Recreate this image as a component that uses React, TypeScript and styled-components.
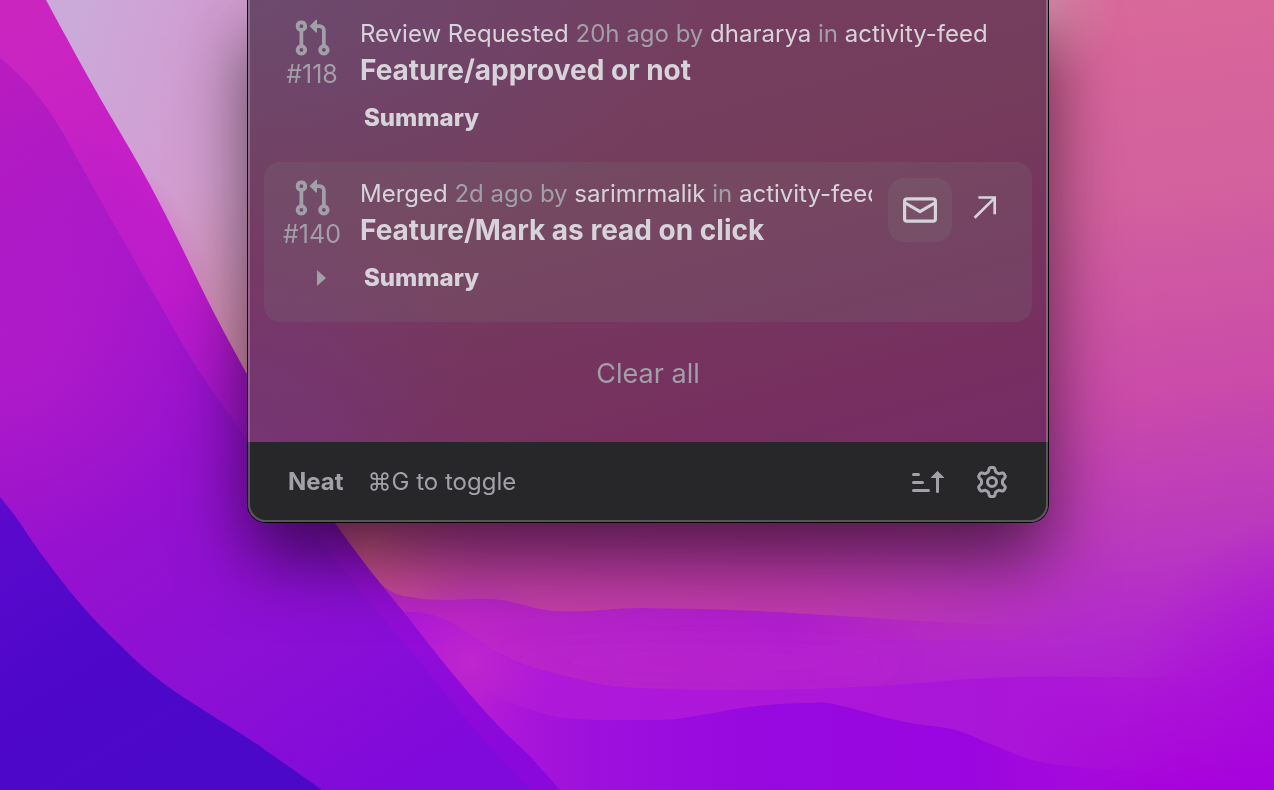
import React from "react";
import styled, { createGlobalStyle } from "styled-components";

const GlobalStyle = createGlobalStyle`
  *, *::before, *::after { box-sizing: border-box; }
  html, body { margin: 0; padding: 0; }
  body { background: #b81fd0; overflow: hidden; }
  button { font: inherit; color: inherit; background: none; border: 0; padding: 0; cursor: pointer; }
`;

const colors = {
  bright: "#d6d3da",
  dim: "#a19fa8",
  footer: "#272729",
  footerText: "#a1a1aa",
};

const Desktop = styled.div`
  min-height: 100vh;
  display: flex;
  justify-content: center;
  align-items: flex-start;
  padding-left: 22px;
  font-family: Inter, "Liberation Sans", sans-serif;
  font-size: 24px;
  line-height: 32px;
  color: ${colors.bright};
`;

const WallpaperSvg = styled.svg`
  position: fixed;
  inset: 0;
  width: 100%;
  height: 100%;
  z-index: -1;
`;

const Panel = styled.main`
  position: relative;
  width: 100%;
  max-width: 800px;
  border-radius: 0 0 18px 18px;
  background:
    radial-gradient(ellipse 460px 260px at 0 0, #6c4a6e, #6c4a6e00),
    radial-gradient(ellipse 240px 320px at 0 88%, #763575, #76357500),
    linear-gradient(165deg, #733f62 0%, #753c5c 40%, #762f60 75%, #752a6b 100%);
  box-shadow: 0 0 0 1px #060206, 0 36px 72px rgba(0, 0, 0, 0.6);

  &::after {
    content: "";
    position: absolute;
    inset: 0;
    border: 2px solid rgba(255, 255, 255, 0.22);
    border-top: 0;
    border-radius: inherit;
    pointer-events: none;
  }
`;

const List = styled.ul`
  list-style: none;
  margin: 0;
  padding: 2px 16px 0;
`;

const Item = styled.li<{ $active?: boolean }>`
  display: grid;
  grid-template-columns: 96px minmax(0, 1fr) auto;
  padding: 16px 16px 28px 0;
  border-radius: 16px;
  background: ${(p) => (p.$active ? "rgba(120, 120, 120, 0.22)" : "transparent")};
`;

const Kind = styled.div`
  display: flex;
  flex-direction: column;
  align-items: center;
  font-size: 25px;
  color: ${colors.dim};
`;

const Heading = styled.div`
  min-width: 0;
`;

const Meta = styled.p`
  margin: 0;
  overflow: hidden;
  white-space: nowrap;
  color: ${colors.dim};
`;

const Strong = styled.span`
  color: ${colors.bright};
`;

const Title = styled.h2`
  margin: 0;
  font-size: 28px;
  line-height: 40px;
  font-weight: 700;
  white-space: nowrap;
`;

const Actions = styled.div`
  display: flex;
  margin-left: 16px;
`;

const ActionButton = styled.button<{ $filled?: boolean }>`
  display: grid;
  place-items: center;
  width: 64px;
  height: 64px;
  border-radius: 16px;
  background: ${(p) => (p.$filled ? "rgba(125, 125, 125, 0.2)" : "transparent")};
`;

const Details = styled.details`
  grid-column: 1 / -1;
  margin-top: 12px;
`;

const Summary = styled.summary`
  display: flex;
  align-items: center;
  gap: 36px;
  padding-left: 52px;
  font-weight: 800;
  list-style: none;
  cursor: pointer;
  &::-webkit-details-marker { display: none; }
`;

const Marker = styled.svg<{ $shown?: boolean }>`
  width: 12px;
  height: 18px;
  fill: ${colors.dim};
  visibility: ${(p) => (p.$shown ? "visible" : "hidden")};
`;

const ClearRow = styled.div`
  display: flex;
  justify-content: center;
  padding: 32px 0 48px;
`;

const ClearButton = styled.button`
  && {
    font-size: 27px;
    line-height: 40px;
    color: ${colors.dim};
  }
`;

const Footer = styled.footer`
  display: flex;
  align-items: center;
  gap: 24px;
  height: 80px;
  padding: 0 40px;
  border-radius: 0 0 18px 18px;
  background: ${colors.footer};
  color: ${colors.footerText};
`;

const Brand = styled.strong`
  font-weight: 700;
`;

const Tools = styled.div`
  display: flex;
  gap: 32px;
  margin-left: auto;
`;

const ToolButton = styled.button`
  display: grid;
  place-items: center;
  width: 32px;
  height: 32px;
`;

const paths = {
  pull: "M1.5 3.25a2.25 2.25 0 1 1 3 2.122v5.256a2.251 2.251 0 1 1-1.5 0V5.372A2.25 2.25 0 0 1 1.5 3.25Zm5.677-.177L9.573.677A.25.25 0 0 1 10 .854V2.5h1A2.5 2.5 0 0 1 13.5 5v5.628a2.251 2.251 0 1 1-1.5 0V5a1 1 0 0 0-1-1h-1v1.646a.25.25 0 0 1-.427.177L7.177 3.427a.25.25 0 0 1 0-.354ZM3.75 2.5a.75.75 0 1 0 0 1.5.75.75 0 0 0 0-1.5Zm0 9.5a.75.75 0 1 0 0 1.5.75.75 0 0 0 0-1.5Zm8.25.75a.75.75 0 1 0 1.5 0 .75.75 0 0 0-1.5 0Z",
  mail: "M1.75 2h12.5c.966 0 1.75.784 1.75 1.75v8.5A1.75 1.75 0 0 1 14.25 14H1.75A1.75 1.75 0 0 1 0 12.25v-8.5C0 2.784.784 2 1.75 2ZM1.5 12.251c0 .138.112.25.25.25h12.5a.25.25 0 0 0 .25-.25V5.809L8.38 9.397a.75.75 0 0 1-.76 0L1.5 5.809v6.442Zm13-8.181v-.32a.25.25 0 0 0-.25-.25H1.75a.25.25 0 0 0-.25.25v.32L8 7.88Z",
  sort: "m12.927 2.573 3 3A.25.25 0 0 1 15.75 6H13.5v6.75a.75.75 0 0 1-1.5 0V6H9.75a.25.25 0 0 1-.177-.427l3-3a.25.25 0 0 1 .354 0ZM0 12.25a.75.75 0 0 1 .75-.75h7.5a.75.75 0 0 1 0 1.5H.75a.75.75 0 0 1-.75-.75Zm0-4a.75.75 0 0 1 .75-.75h4.5a.75.75 0 0 1 0 1.5H.75A.75.75 0 0 1 0 8.25Zm0-4a.75.75 0 0 1 .75-.75h2.5a.75.75 0 0 1 0 1.5H.75A.75.75 0 0 1 0 4.25Z",
  gear: "M8 0a8.2 8.2 0 0 1 .701.031C9.444.095 9.99.645 10.16 1.29l.288 1.107c.018.066.079.158.212.224.231.114.454.243.668.386.123.082.233.09.299.071l1.103-.303c.644-.176 1.392.021 1.82.63.27.385.506.792.704 1.218.315.675.111 1.422-.364 1.891l-.814.806c-.049.048-.098.147-.088.294.016.257.016.515 0 .772-.01.147.038.246.088.294l.814.806c.475.469.679 1.216.364 1.891a7.977 7.977 0 0 1-.704 1.217c-.428.61-1.176.807-1.82.63l-1.102-.302c-.067-.019-.177-.011-.3.071a5.909 5.909 0 0 1-.668.386c-.133.066-.194.158-.211.224l-.29 1.106c-.168.646-.715 1.196-1.458 1.26a8.006 8.006 0 0 1-1.402 0c-.743-.064-1.289-.614-1.458-1.26l-.289-1.106c-.018-.066-.079-.158-.212-.224a5.738 5.738 0 0 1-.668-.386c-.123-.082-.233-.09-.299-.071l-1.103.303c-.644.176-1.392-.021-1.82-.63a8.12 8.12 0 0 1-.704-1.218c-.315-.675-.111-1.422.363-1.891l.815-.806c.05-.048.098-.147.088-.294a6.214 6.214 0 0 1 0-.772c.01-.147-.038-.246-.088-.294l-.815-.806C.635 6.045.431 5.298.746 4.623a7.92 7.92 0 0 1 .704-1.217c.428-.61 1.176-.807 1.82-.63l1.102.302c.067.019.177.011.3-.071.214-.143.437-.272.668-.386.133-.066.194-.158.211-.224l.29-1.106C6.009.645 6.556.095 7.299.03 7.53.01 7.764 0 8 0Zm-.571 1.525c-.036.003-.108.036-.137.146l-.289 1.105c-.147.561-.549.967-.998 1.189-.173.086-.34.183-.5.29-.417.278-.97.423-1.529.27l-1.103-.303c-.109-.03-.175.016-.195.045-.22.312-.412.644-.573.99-.014.031-.021.11.059.19l.815.806c.411.406.562.957.53 1.456a4.709 4.709 0 0 0 0 .582c.032.499-.119 1.05-.53 1.456l-.815.806c-.081.08-.073.159-.059.19.162.346.353.677.573.989.02.03.085.076.195.046l1.102-.303c.56-.153 1.113-.008 1.53.27.161.107.328.204.501.29.447.222.85.629.997 1.189l.289 1.105c.029.109.101.143.137.146a6.6 6.6 0 0 0 1.142 0c.036-.003.108-.036.137-.146l.289-1.105c.147-.561.549-.967.998-1.189.173-.086.34-.183.5-.29.417-.278.97-.423 1.529-.27l1.103.303c.109.029.175-.016.195-.045.22-.313.411-.644.573-.99.014-.031.021-.11-.059-.19l-.815-.806c-.411-.406-.562-.957-.53-1.456a4.709 4.709 0 0 0 0-.582c-.032-.499.119-1.05.53-1.456l.815-.806c.081-.08.073-.159.059-.19a6.464 6.464 0 0 0-.573-.989c-.02-.03-.085-.076-.195-.046l-1.102.303c-.56.153-1.113.008-1.53-.27a4.44 4.44 0 0 0-.501-.29c-.447-.222-.85-.629-.997-1.189l-.289-1.105c-.029-.11-.101-.143-.137-.146a6.6 6.6 0 0 0-1.142 0ZM11 8a3 3 0 1 1-6 0 3 3 0 0 1 6 0ZM9.5 8a1.5 1.5 0 1 0-3.001.001A1.5 1.5 0 0 0 9.5 8Z",
};

function Icon({ name, size }: { name: keyof typeof paths; size: number }) {
  return (
    <svg
      width={size}
      height={size}
      viewBox="0 0 16 16"
      fill="currentColor"
      aria-hidden="true"
    >
      <path d={paths[name]} />
    </svg>
  );
}

function ArrowIcon() {
  return (
    <svg width="32" height="32" viewBox="0 0 32 32" fill="none" stroke="currentColor" strokeWidth="2.7" aria-hidden="true">
      <path d="M6.6 23.7 27 3.6M10.4 3.5h16.3v16.8" />
    </svg>
  );
}

const EDGE = "C66 37 82 66 100 98C118 129 134 155 150 185C168 218 184 252 200 285C216 318 231 345 248 376C274 420 304 470 335 523C359 557 382 586 408 617C436 654 462 686 490 717C504 732 518 745 530 756";

function Wallpaper() {
  return (
    <WallpaperSvg viewBox="0 0 1274 790" preserveAspectRatio="xMidYMid slice" aria-hidden="true">
      <defs>
        <linearGradient id="sky" gradientUnits="userSpaceOnUse" x1="1080" y1="0" x2="1190" y2="790">
          <stop offset="0" stopColor="#d9689a" />
          <stop offset="0.25" stopColor="#d3619e" />
          <stop offset="0.5" stopColor="#ca4ba9" />
          <stop offset="0.68" stopColor="#bb39be" />
          <stop offset="0.82" stopColor="#b025d0" />
          <stop offset="1" stopColor="#a800dc" />
        </linearGradient>
        <linearGradient id="lilac" gradientUnits="userSpaceOnUse" x1="70" y1="60" x2="300" y2="130">
          <stop offset="0" stopColor="#cba9d8" />
          <stop offset="0.5" stopColor="#d29ed2" />
          <stop offset="1" stopColor="#d8a2d0" />
        </linearGradient>
        <linearGradient id="lilacFade" gradientUnits="userSpaceOnUse" x1="0" y1="180" x2="0" y2="400">
          <stop offset="0" stopColor="#d690b4" stopOpacity="0" />
          <stop offset="1" stopColor="#da86a8" />
        </linearGradient>
        <radialGradient id="haze" gradientUnits="userSpaceOnUse" cx="1030" cy="0" r="90">
          <stop offset="0" stopColor="#d3a0b0" stopOpacity="0.8" />
          <stop offset="0.5" stopColor="#d3a0b0" stopOpacity="0.3" />
          <stop offset="1" stopColor="#d3a0b0" stopOpacity="0" />
        </radialGradient>
        <linearGradient id="band" gradientUnits="userSpaceOnUse" x1="60" y1="0" x2="500" y2="760">
          <stop offset="0" stopColor="#cb25c0" />
          <stop offset="0.35" stopColor="#c11bcd" />
          <stop offset="0.55" stopColor="#9d14d0" />
          <stop offset="1" stopColor="#8a08dc" />
        </linearGradient>
        <linearGradient id="purple" gradientUnits="userSpaceOnUse" x1="0" y1="80" x2="460" y2="760">
          <stop offset="0" stopColor="#b81cc0" />
          <stop offset="0.4" stopColor="#9c13cd" />
          <stop offset="0.8" stopColor="#890fd6" />
          <stop offset="1" stopColor="#8009dc" />
        </linearGradient>
        <radialGradient id="leftPink" gradientUnits="userSpaceOnUse" cx="0" cy="330" r="220">
          <stop offset="0" stopColor="#b01bc8" />
          <stop offset="1" stopColor="#b01bc8" stopOpacity="0" />
        </radialGradient>
        <linearGradient id="blue" gradientUnits="userSpaceOnUse" x1="0" y1="500" x2="180" y2="790">
          <stop offset="0" stopColor="#5c0acd" />
          <stop offset="0.5" stopColor="#4f07c9" />
          <stop offset="1" stopColor="#4b08c8" />
        </linearGradient>
        <linearGradient id="warm" gradientUnits="userSpaceOnUse" x1="340" y1="0" x2="1060" y2="0">
          <stop offset="0" stopColor="#c643a4" />
          <stop offset="0.6" stopColor="#c23aae" />
          <stop offset="1" stopColor="#c23aae" stopOpacity="0" />
        </linearGradient>
        <radialGradient id="coral" gradientUnits="userSpaceOnUse" cx="370" cy="545" r="120">
          <stop offset="0" stopColor="#d55790" />
          <stop offset="1" stopColor="#cd45a0" stopOpacity="0" />
        </radialGradient>
        <linearGradient id="ridge1" gradientUnits="userSpaceOnUse" x1="400" y1="0" x2="1050" y2="0">
          <stop offset="0" stopColor="#bb28c4" />
          <stop offset="0.6" stopColor="#b11fd0" />
          <stop offset="1" stopColor="#b11fd0" stopOpacity="0" />
        </linearGradient>
        <linearGradient id="ridge2" gradientUnits="userSpaceOnUse" x1="400" y1="0" x2="1200" y2="0">
          <stop offset="0" stopColor="#af19da" />
          <stop offset="0.75" stopColor="#aa16d8" />
          <stop offset="1" stopColor="#a908da" stopOpacity="0" />
        </linearGradient>
        <linearGradient id="ridge3" gradientUnits="userSpaceOnUse" x1="480" y1="0" x2="1180" y2="0">
          <stop offset="0" stopColor="#a010da" stopOpacity="0" />
          <stop offset="0.16" stopColor="#9d10dc" />
          <stop offset="0.42" stopColor="#9708e0" />
          <stop offset="0.7" stopColor="#9a05e0" />
          <stop offset="1" stopColor="#a402de" stopOpacity="0" />
        </linearGradient>
        <radialGradient id="pink" gradientUnits="userSpaceOnUse" cx="470" cy="662" r="90">
          <stop offset="0" stopColor="#c42ac8" stopOpacity="0.8" />
          <stop offset="1" stopColor="#bd20d0" stopOpacity="0" />
        </radialGradient>
        <radialGradient id="violetCorner" gradientUnits="userSpaceOnUse" cx="1330" cy="720" r="210">
          <stop offset="0" stopColor="#a606dc" stopOpacity="0.9" />
          <stop offset="1" stopColor="#a606dc" stopOpacity="0" />
        </radialGradient>
        <filter id="soft" x="-20%" y="-150%" width="140%" height="400%">
          <feGaussianBlur stdDeviation="14" />
        </filter>
      </defs>
      <rect width="1274" height="790" fill="url(#sky)" />
      <rect width="640" height="500" fill="url(#lilac)" />
      <rect y="180" width="400" height="300" fill="url(#lilacFade)" />
      <rect x="900" width="260" height="120" fill="url(#haze)" />
      <rect x="250" y="480" width="850" height="160" fill="url(#warm)" />
      <rect x="220" y="400" width="300" height="250" fill="url(#coral)" />
      <path d="M359 557C372 578 390 597 412 597C440 603 468 598 490 599C515 600 530 609 555 611C590 613 610 608 640 608C690 609 730 609 777 612C840 616 900 620 1050 628V790H400Z" fill="url(#ridge1)" />
      <ellipse cx="700" cy="662" rx="200" ry="16" fill="#bd20cf" opacity=".5" filter="url(#soft)" />
      <path d="M405 612C430 610 448 620 469 633C490 648 505 657 522 663C540 670 555 674 571 677C595 684 615 687 640 688C740 692 830 690 920 683C1000 675 1060 675 1274 680V790H500Z" fill="url(#ridge2)" />
      <rect x="1110" y="490" width="164" height="300" fill="url(#violetCorner)" />
      <rect x="380" y="570" width="190" height="190" fill="url(#pink)" />
      <path d="M480 690C520 706 545 716 563 718C590 721 615 720 640 720C660 720 672 720 683 718C705 715 720 711 736 709C765 704 790 703 814 703C824 702 830 703 838 705C865 711 886 719 911 723C926 726 940 726 952 729C972 734 984 742 1001 748C1015 754 1028 760 1042 762C1070 768 1110 770 1180 772V790H480Z" fill="url(#ridge3)" />
      <path d={`M46 0${EDGE}L560 790H0V0Z`} fill="url(#band)" />
      <path d="M0 58C28 80 50 108 68 142C100 200 135 262 170 322C196 370 220 402 248 440C300 520 360 590 410 650C450 700 490 750 530 790H0Z" fill="url(#purple)" />
      <rect y="100" width="240" height="460" fill="url(#leftPink)" />
      <path d="M0 497C8 507 14 514 20 523C35 546 47 562 61 580C80 605 100 626 122 647C136 661 149 672 163 683C183 698 204 710 224 723C238 732 252 740 265 750C285 764 304 777 322 790H0Z" fill="url(#blue)" />
    </WallpaperSvg>
  );
}

interface Notification {
  id: string;
  event: string;
  age: string;
  author: string;
  repo: string;
  title: string;
  active?: boolean;
}

const notifications: Notification[] = [
  { id: "#118", event: "Review Requested", age: "20h ago", author: "dhararya", repo: "activity-feed", title: "Feature/approved or not" },
  { id: "#140", event: "Merged", age: "2d ago", author: "sarimrmalik", repo: "activity-feed", title: "Feature/Mark as read on click", active: true },
];

function NotificationRow({ n }: { n: Notification }) {
  return (
    <Item $active={n.active}>
      <Kind>
        <Icon name="pull" size={40} />
        <span>{n.id}</span>
      </Kind>
      <Heading>
        <Meta>
          <Strong>{n.event}</Strong> {n.age} by <Strong>{n.author}</Strong> in <Strong>{n.repo}</Strong>
        </Meta>
        <Title>{n.title}</Title>
      </Heading>
      {n.active && (
        <Actions>
          <ActionButton $filled type="button" aria-label="Mark as read">
            <Icon name="mail" size={34} />
          </ActionButton>
          <ActionButton type="button" aria-label="Open">
            <ArrowIcon />
          </ActionButton>
        </Actions>
      )}
      <Details>
        <Summary>
          <Marker $shown={n.active} viewBox="0 0 12 18" aria-hidden="true">
            <path d="M1 1 10 9 1 17Z" />
          </Marker>
          Summary
        </Summary>
      </Details>
    </Item>
  );
}

export default function App() {
  return (
    <>
      <GlobalStyle />
      <Wallpaper />
      <Desktop>
        <Panel>
          <List>
            {notifications.map((n) => (
              <NotificationRow key={n.id} n={n} />
            ))}
          </List>
          <ClearRow>
            <ClearButton type="button">Clear all</ClearButton>
          </ClearRow>
          <Footer>
            <Brand>Neat</Brand>
            <span>⌘G to toggle</span>
            <Tools>
              <ToolButton type="button" aria-label="Sort">
                <Icon name="sort" size={32} />
              </ToolButton>
              <ToolButton type="button" aria-label="Settings">
                <Icon name="gear" size={32} />
              </ToolButton>
            </Tools>
          </Footer>
        </Panel>
      </Desktop>
    </>
  );
}
